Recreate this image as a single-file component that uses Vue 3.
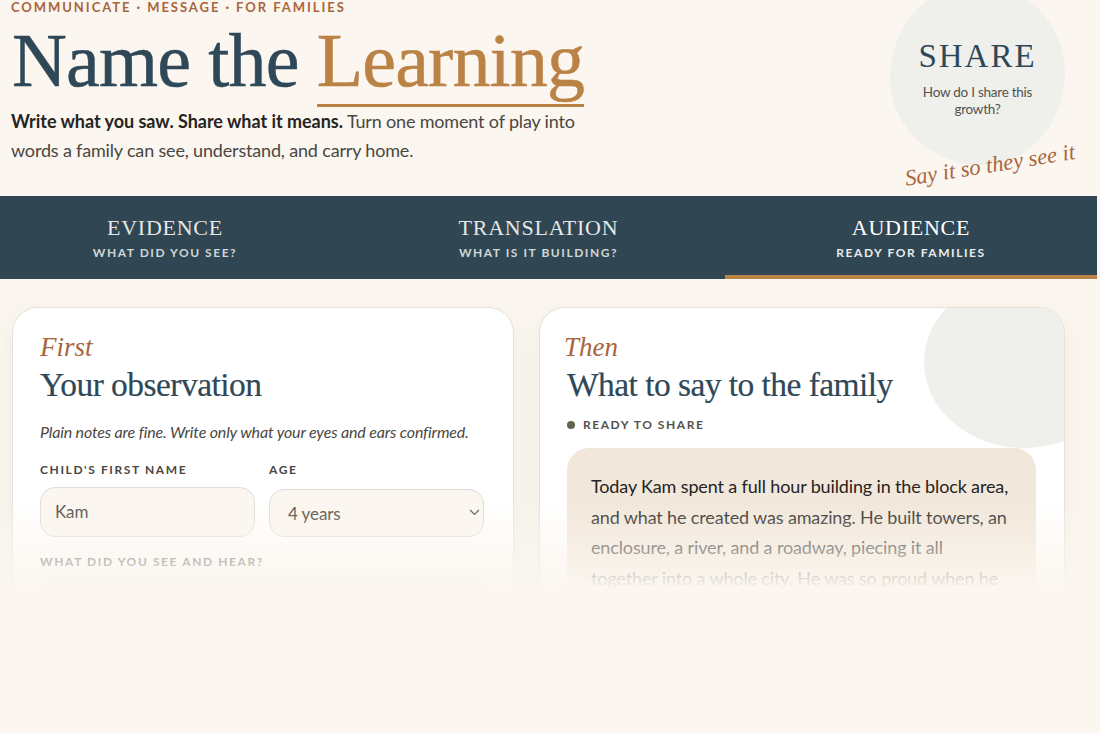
<template>
  <div class="page">
    <header class="hero">
      <div class="hero-text">
        <div class="eyebrow">COMMUNICATE · MESSAGE · FOR FAMILIES</div>
        <h1 class="title">Name the <span class="accent">Learning</span></h1>
        <p class="lead"><strong>Write what you saw. Share what it means.</strong> Turn one moment of play into words a family can see, understand, and carry home.</p>
      </div>
      <div class="badge-wrap">
        <div class="blob">
          <div class="blob-title">SHARE</div>
          <div class="blob-sub">How do I share this growth?</div>
        </div>
        <div class="tagline">Say it so they see it</div>
      </div>
    </header>

    <nav class="tabs">
      <div v-for="t in tabs" :key="t.title" class="tab" :class="{ active: t.active }">
        <div class="tab-title">{{ t.title }}</div>
        <div class="tab-sub">{{ t.sub }}</div>
      </div>
    </nav>

    <main class="cards">
      <section class="card">
        <div class="script">First</div>
        <h2 class="card-title">Your observation</h2>
        <p class="hint">Plain notes are fine. Write only what your eyes and ears confirmed.</p>
        <div class="fields">
          <div class="field">
            <label class="label">CHILD'S FIRST NAME</label>
            <input class="control tall" value="Kam" />
          </div>
          <div class="field">
            <label class="label">AGE</label>
            <div class="select-wrap">
              <select class="control">
                <option>4 years</option>
              </select>
              <svg class="chevron" viewBox="0 0 12 8" width="11" height="7"><path d="M1 1.2 L6 6.2 L11 1.2" fill="none" stroke="#55514b" stroke-width="1.4" /></svg>
            </div>
          </div>
        </div>
        <label class="label see">WHAT DID YOU SEE AND HEAR?</label>
        <div class="textarea"></div>
      </section>

      <section class="card right">
        <div class="corner"></div>
        <div class="script then">Then</div>
        <h2 class="card-title">What to say to the family</h2>
        <div class="status"><span class="dot"></span>READY TO SHARE</div>
        <div class="message">Today Kam spent a full hour building in the block area, and what he created was amazing. He built towers, an enclosure, a river, and a roadway, piecing it all together into a whole city. He was so proud when he</div>
      </section>
      <div class="fade"></div>
    </main>
  </div>
</template>

<script setup>
const tabs = [
  { title: 'EVIDENCE', sub: 'WHAT DID YOU SEE?' },
  { title: 'TRANSLATION', sub: 'WHAT IS IT BUILDING?' },
  { title: 'AUDIENCE', sub: 'READY FOR FAMILIES', active: true },
]
</script>

<style>
html, body { margin: 0; background: #fbf6ef; }
</style>

<style scoped>
.page {
  width: 1100px;
  height: 733px;
  overflow: hidden;
  background: #fbf6ef;
  font-family: Lato, "Liberation Sans", sans-serif;
  color: #4a4743;
}
.hero {
  height: 196px;
  display: flex;
  justify-content: space-between;
  padding: 0 35px 0 11px;
  box-sizing: border-box;
}
.hero-text { width: 590px; }
.eyebrow {
  font-size: 13px;
  font-weight: 700;
  letter-spacing: 1.95px;
  color: #a9653c;
  line-height: 15px;
}
.title {
  margin: 3px 0 0 1px;
  font-family: "Liberation Serif", serif;
  font-weight: 400;
  font-size: 76px;
  line-height: 84px;
  letter-spacing: -0.85px;
  -webkit-text-stroke: 0.5px currentColor;
  color: #2f4858;
  white-space: nowrap;
}
.accent {
  color: #bb8246;
  display: inline-block;
  line-height: 84px;
  padding-bottom: 2px;
  border-bottom: 3px solid #bb8246;
}
.lead {
  margin: 0;
  font-size: 18px;
  line-height: 29px;
  letter-spacing: -0.17px;
  color: #4a4743;
  width: 590px;
}
.lead strong { color: #26241f; font-weight: 700; letter-spacing: -0.03px; }
.badge-wrap { position: relative; width: 175px; }
.blob {
  width: 175px;
  height: 182px;
  margin-top: -17px;
  background: #eff0eb;
  border-radius: 50% 50% 48% 52% / 52% 50% 50% 48%;
  display: flex;
  flex-direction: column;
  align-items: center;
  justify-content: center;
  text-align: center;
  padding-top: 8px;
  box-sizing: border-box;
}
.blob-title {
  font-family: "Liberation Serif", serif;
  font-size: 33px;
  letter-spacing: 2px;
  color: #2f4858;
  line-height: 40px;
  margin-top: -2px;
}
.blob-sub {
  margin-top: 8px;
  width: 130px;
  font-size: 13.5px;
  letter-spacing: -0.25px;
  line-height: 17px;
  color: #55514b;
}
.tagline {
  position: absolute;
  left: 13px;
  top: 166px;
  white-space: nowrap;
  font-family: "Liberation Serif", serif;
  font-style: italic;
  font-size: 22.5px;
  color: #a9653c;
  transform: rotate(-9deg);
  transform-origin: left top;
}
.tabs {
  width: 1097px;
  height: 83px;
  display: grid;
  grid-template-columns: 352px 373px 372px;
  background: #304653;
}
.tab {
  text-align: center;
  padding-top: 18px;
  box-sizing: border-box;
  color: #e3e7e6;
}
.tab:first-child { padding-right: 22px; }
.tab.active { border-bottom: 4px solid #bb8246; color: #fff; }
.tab-title {
  font-family: "Liberation Serif", serif;
  font-size: 22px;
  letter-spacing: 0.75px;
  line-height: 28px;
}
.tab-sub {
  margin-top: 3px;
  font-size: 12px;
  font-weight: 700;
  letter-spacing: 1.55px;
  line-height: 16px;
  color: #cfd6d6;
}
.tab.active .tab-sub { color: #e8ecec; }
.cards {
  position: relative;
  height: 311px;
  padding: 28px 35px 0 12px;
  box-sizing: border-box;
  display: grid;
  grid-template-columns: 502px 526px;
  column-gap: 25px;
  overflow: hidden;
}
.card {
  position: relative;
  height: 420px;
  box-sizing: border-box;
  background: #fff;
  border: 1px solid #e3e3dd;
  border-radius: 26px;
  padding: 24px 27px;
  box-shadow: 0 6px 24px rgba(120, 95, 60, 0.07);
  overflow: hidden;
}
.script {
  position: relative;
  font-family: "Liberation Serif", serif;
  font-style: italic;
  font-size: 27px;
  line-height: 30px;
  color: #a9653c;
}
.script.then { margin-left: -3px; }
.card-title {
  position: relative;
  margin: 3px 0 0;
  font-family: "Liberation Serif", serif;
  font-weight: 400;
  font-size: 33.5px;
  letter-spacing: -0.55px;
  -webkit-text-stroke: 0.2px currentColor;
  line-height: 40px;
  color: #2f4858;
}
.hint {
  margin: 16px 0 0;
  font-size: 16px;
  font-style: italic;
  letter-spacing: -0.16px;
  line-height: 22px;
  color: #4a4743;
  white-space: nowrap;
}
.fields {
  margin-top: 19px;
  display: grid;
  grid-template-columns: 215px 215px;
  column-gap: 14px;
}
.label {
  display: block;
  font-size: 12px;
  font-weight: 700;
  letter-spacing: 1.6px;
  line-height: 16px;
  color: #4a4743;
}
.control {
  display: block;
  width: 100%;
  box-sizing: border-box;
  height: 48px;
  margin-top: 11px;
  background: #fbf6ef;
  border: 1.5px solid #deddd6;
  border-radius: 15px;
  padding: 0 18px;
  font-family: Lato, sans-serif;
  font-size: 17px;
  letter-spacing: -0.1px;
  color: #4a4743;
  appearance: none;
  outline: none;
}
.control.tall { height: 50px; margin-top: 9px; padding: 0 14px 2px; }
.select-wrap { position: relative; }
.chevron { position: absolute; right: 4px; top: 20px; pointer-events: none; }
.see { margin-top: 17px; }
.textarea {
  margin-top: 8px;
  height: 100px;
  background: #fbf6ef;
  border: 1.5px solid #deddd6;
  border-radius: 15px;
}
.corner {
  position: absolute;
  top: -32px;
  right: -60px;
  width: 200px;
  height: 172px;
  background: #eff0eb;
  border-radius: 50%;
}
.status {
  position: relative;
  margin-top: 12px;
  display: flex;
  align-items: center;
  font-size: 12px;
  font-weight: 700;
  letter-spacing: 1.55px;
  line-height: 16px;
  color: #55514b;
}
.dot {
  width: 8px;
  height: 8px;
  border-radius: 50%;
  background: #5f6650;
  margin-right: 8px;
}
.message {
  position: relative;
  margin-top: 15px;
  background: #f1e7da;
  border-radius: 22px;
  padding: 23px 24px 20px 24px;
  width: 469px;
  box-sizing: border-box;
  font-size: 18px;
  letter-spacing: -0.14px;
  line-height: 30.6px;
  color: #26241f;
}
.fade {
  position: absolute;
  left: 0;
  right: 0;
  top: 0;
  bottom: 0;
  pointer-events: none;
  background: linear-gradient(to bottom, rgba(251, 246, 239, 0) 220px, #fbf6ef 311px);
}
</style>
